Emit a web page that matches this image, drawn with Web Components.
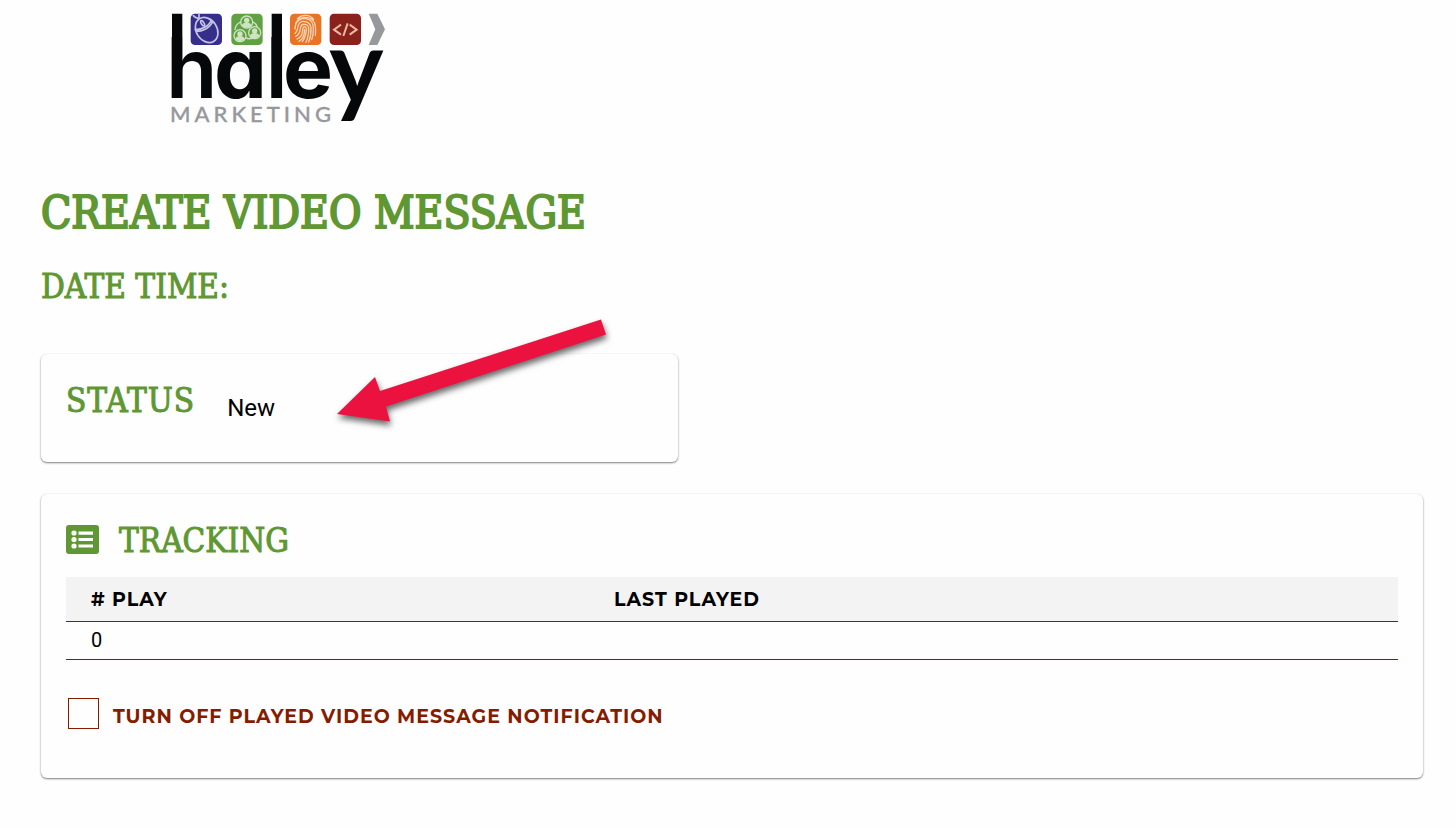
<!DOCTYPE html>
<html lang="en">
<head>
<meta charset="utf-8">
<title>Create Video Message</title>
<style>
  html { --green: #5f9732; --rust: #851c00; --slab: "Roboto Slab", "DejaVu Serif Condensed", "DejaVu Serif", serif; --label: Montserrat, Inter, sans-serif; }
  body { margin: 0; background: #fefefe; color: #000; font-family: Roboto, sans-serif; }
</style>
</head>
<body>
<video-message-page></video-message-page>
<script>
const define = (name, html) => customElements.define(name, class extends HTMLElement {
  constructor() {
    super();
    this.attachShadow({ mode: "open" }).innerHTML = html;
  }
});

define("brand-logo", `
<style>
  :host { display: block; }
  svg { display: block; width: 216px; height: 112px; overflow: visible; }
  .word { font: 600 252px Inter, sans-serif; font-feature-settings: "cv11"; fill: #060708; }
  .bowl { font-weight: 700; }
  .tail { font: 700 308px Lato, sans-serif; }
  .sub { font: 500 66px Lato, sans-serif; letter-spacing: 12px; fill: #97989b; stroke: #97989b; stroke-width: 1px; }
</style>
<svg viewBox="30 36 648 336" role="img" aria-label="Haley Marketing">
  <rect x="92" y="41" width="94" height="94" rx="13" fill="#352f8b"/>
  <g fill="none" stroke="#c6c4e2" stroke-width="5" stroke-linecap="round">
    <ellipse cx="140" cy="90" rx="31" ry="40" transform="rotate(-33 140 90)"/>
    <path d="M106 89c19 1 43-12 48-29M100 47c6 7 11 9 17 6V41M109 94c17 0 42-10 48-28"/>
    <ellipse cx="128" cy="70" rx="4" ry="9" transform="rotate(-33 128 70)"/>
  </g>
  <rect x="214" y="41" width="94" height="94" rx="13" fill="#60a143"/>
  <g fill="none" stroke="#d0e4c3" stroke-width="4">
    <circle cx="260" cy="66" r="18"/><circle cx="240" cy="107" r="18"/><circle cx="284" cy="98" r="18"/>
    <path d="M241 66c-11 6-16 14-16 24M279 66c9 5 12 9 12 15M257 113c8 5 17 3 22 0"/>
  </g>
  <g fill="#d0e4c3">
    <circle cx="260" cy="61" r="8"/><path d="M246 77c1-13 27-13 28 0-8 7-20 7-28 0z"/>
    <circle cx="240" cy="102" r="8"/><path d="M226 118c1-13 27-13 28 0-8 7-20 7-28 0z"/>
    <circle cx="284" cy="93" r="8"/><path d="M270 109c1-13 27-13 28 0-8 7-20 7-28 0z"/>
  </g>
  <rect x="390" y="41" width="94" height="94" rx="13" fill="#e87424"/>
  <g fill="none" stroke="#f8d3b5" stroke-width="4" stroke-linecap="round">
    <path d="M412 56c15-14 37-13 49 2M407 70c12-24 47-24 57 0 4 12 3 25 2 36M405 87c0-28 22-33 32-31 18 2 24 17 23 32 0 12-2 23-5 31M405 100c9-6 7-17 10-25 8-17 35-13 38 8 1 15-2 31-7 43M407 109c14-5 13-19 15-28 4-13 23-10 24 4 1 15-2 28-8 42M411 117c17-7 16-20 18-32 2-7 10-6 10 2 0 14-4 26-12 38M417 124c11-6 16-17 17-35"/>
  </g>
  <rect x="509" y="41" width="94" height="94" rx="13" fill="#8b211b"/>
  <path d="M543 74l-21 15 21 15M569 74l21 15-21 15M563 70l-13 38" fill="none" stroke="#e7b9a0" stroke-width="6"/>
  <path d="M626 41h26l23 47-23 47h-26l20-47z" fill="#97989b"/>
  <path d="M36 41h31v252H36zM335 41h31v252h-31z" fill="#060708"/>
  <text class="word"><tspan x="18" y="293">h</tspan><tspan class="bowl" x="162">a</tspan><tspan x="317">l</tspan><tspan class="bowl" x="369">e</tspan><tspan class="tail" x="508" y="312">y</tspan></text>
  <text class="sub" x="30" y="366">MARKETING</text>
</svg>`);

define("section-title", `
<style>
  :host { display: block; color: var(--green); }
  h2 { margin: 0; font: 400 33px/40px var(--slab); text-transform: uppercase; -webkit-text-stroke: 1px var(--green); }
</style>
<h2><slot></slot></h2>`);

define("page-title", `
<style>
  :host { display: block; color: var(--green); }
  h1 { margin: 0; font: 400 44px/56px var(--slab); text-transform: uppercase; -webkit-text-stroke: 2px var(--green); }
</style>
<h1><slot></slot></h1>`);

define("content-card", `
<style>
  :host { display: block; position: relative; box-sizing: border-box; padding: 25px; border-radius: 6px; background: #fefefe; box-shadow: 0 1px 2px rgba(0,0,0,.5), 0 0 1px rgba(0,0,0,.1); }
</style>
<slot></slot>`);

define("pointer-arrow", `
<style>
  :host { display: block; position: absolute; left: 296px; top: -36px; pointer-events: none; }
  svg { display: block; overflow: visible; filter: drop-shadow(1px 4px 3px rgba(0,0,0,.6)); }
</style>
<svg width="270" height="105" viewBox="0 0 270 105" aria-hidden="true"><path d="M0 96L38 59l5 14L264 1.500l5 15L49 88.500l4 15z" fill="#ec123f"/></svg>`);

define("list-icon", `
<style>:host { display: block; } svg { display: block; }</style>
<svg width="33" height="29" viewBox="0 0 33 29" aria-hidden="true">
  <rect width="33" height="29" rx="3" fill="#5f9732"/>
  <g fill="#fefefe"><circle cx="8" cy="8" r="2.600"/><circle cx="8" cy="14.500" r="2.600"/><circle cx="8" cy="21" r="2.600"/>
  <path d="M12.500 6.500H27v3.200H12.500zM12.500 12.900H27v3.200H12.500zM12.500 19.400H27v3.200H12.500z"/></g>
</svg>`);

define("status-row", `
<style>
  :host { display: flex; align-items: flex-start; gap: 32px; min-height: 58px; }
  section-title { padding-top: 2px; letter-spacing: 1px; }
  p { margin: 0; padding-top: 15px; font-size: 24px; line-height: 28px; }
</style>
<section-title>Status</section-title><p>New</p>`);

define("play-table", `
<style>
  :host { display: block; }
  table { width: 100%; border-collapse: collapse; table-layout: fixed; }
  th, td { box-sizing: border-box; padding: 0 25px; text-align: left; border-bottom: 1px solid var(--rust); }
  th { height: 44px; padding-top: 2px; background: #f3f3f3; font: 700 19px/24px var(--label); letter-spacing: 1px; text-transform: uppercase; }
  th:first-child { width: 523px; }
  td { height: 38px; font-size: 20px; line-height: 24px; }
</style>
<table><thead><tr><th scope="col"># Play</th><th scope="col">Last Played</th></tr></thead>
<tbody><tr><td>0</td><td></td></tr></tbody></table>`);

define("check-option", `
<style>
  :host { display: flex; align-items: center; gap: 14px; color: var(--rust); }
  input { appearance: none; box-sizing: border-box; width: 31px; height: 31px; margin: 0; border: 1px solid var(--rust); background: transparent; }
  input:checked { background: var(--rust); box-shadow: inset 0 0 0 6px #fefefe; }
  label { padding-top: 7px; font: 700 19px/24px var(--label); letter-spacing: 1px; text-transform: uppercase; }
</style>
<input type="checkbox" id="off"><label for="off"><slot></slot></label>`);

define("tracking-panel", `
<style>
  :host { display: block; }
  header { display: flex; align-items: flex-start; gap: 20px; margin-bottom: 16px; }
  list-icon { padding-top: 6px; }
  section-title { padding-top: 2px; }
  check-option { padding: 38px 2px 24px; }
</style>
<header><list-icon></list-icon><section-title>Tracking</section-title></header>
<play-table></play-table>
<check-option>Turn off played video message notification</check-option>`);

define("video-message-page", `
<style>
  :host { display: block; padding: 12px 33px 48px 41px; }
  brand-logo { margin: 0 0 61px 129px; }
  page-title { margin-bottom: 26px; }
  .status { width: 46%; min-width: 637px; margin: 47px 0 32px; }
</style>
<header><brand-logo></brand-logo></header>
<main>
  <page-title>Create Video Message</page-title>
  <section-title>Date Time:</section-title>
  <content-card class="status"><status-row></status-row><pointer-arrow></pointer-arrow></content-card>
  <content-card><tracking-panel></tracking-panel></content-card>
</main>`);
</script>
</body>
</html>
